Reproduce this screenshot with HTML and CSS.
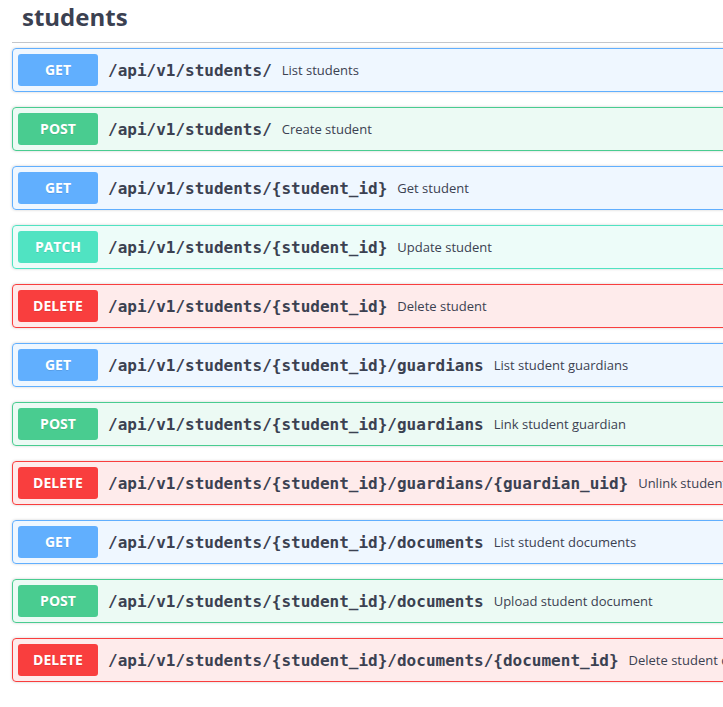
FILE: index.html
```html
<!DOCTYPE html>
<html lang="en">
<head>
    <meta charset="UTF-8">
    <title>students</title>
    <link rel="stylesheet" href="styles.css">
</head>
<body>
    <div class="opblock-tag-section">
        <h3 class="opblock-tag"><span>students</span></h3>
        <div class="operations">
            <div class="opblock opblock-get">
                <span class="opblock-method">GET</span>
                <span class="opblock-path">/api/v1/students/</span>
                <span class="opblock-desc">List students</span>
            </div>
            <div class="opblock opblock-post">
                <span class="opblock-method">POST</span>
                <span class="opblock-path">/api/v1/students/</span>
                <span class="opblock-desc">Create student</span>
            </div>
            <div class="opblock opblock-get">
                <span class="opblock-method">GET</span>
                <span class="opblock-path">/api/v1/students/{student_id}</span>
                <span class="opblock-desc">Get student</span>
            </div>
            <div class="opblock opblock-patch">
                <span class="opblock-method">PATCH</span>
                <span class="opblock-path">/api/v1/students/{student_id}</span>
                <span class="opblock-desc">Update student</span>
            </div>
            <div class="opblock opblock-delete">
                <span class="opblock-method">DELETE</span>
                <span class="opblock-path">/api/v1/students/{student_id}</span>
                <span class="opblock-desc">Delete student</span>
            </div>
            <div class="opblock opblock-get">
                <span class="opblock-method">GET</span>
                <span class="opblock-path">/api/v1/students/{student_id}/guardians</span>
                <span class="opblock-desc">List student guardians</span>
            </div>
            <div class="opblock opblock-post">
                <span class="opblock-method">POST</span>
                <span class="opblock-path">/api/v1/students/{student_id}/guardians</span>
                <span class="opblock-desc">Link student guardian</span>
            </div>
            <div class="opblock opblock-delete">
                <span class="opblock-method">DELETE</span>
                <span class="opblock-path">/api/v1/students/{student_id}/guardians/{guardian_uid}</span>
                <span class="opblock-desc">Unlink student guardian</span>
            </div>
            <div class="opblock opblock-get">
                <span class="opblock-method">GET</span>
                <span class="opblock-path">/api/v1/students/{student_id}/documents</span>
                <span class="opblock-desc">List student documents</span>
            </div>
            <div class="opblock opblock-post">
                <span class="opblock-method">POST</span>
                <span class="opblock-path">/api/v1/students/{student_id}/documents</span>
                <span class="opblock-desc">Upload student document</span>
            </div>
            <div class="opblock opblock-delete">
                <span class="opblock-method">DELETE</span>
                <span class="opblock-path">/api/v1/students/{student_id}/documents/{document_id}</span>
                <span class="opblock-desc">Delete student document</span>
            </div>
        </div>
    </div>
</body>
</html>
```

FILE: styles.css
```css
html, body {
    margin: 0;
    background: #fff;
    overflow: hidden;
}
body {
    font-family: "Open Sans", sans-serif;
    color: #3b4151;
}
.opblock-tag-section {
    width: 840px;
    margin-left: 12px;
}
.opblock-tag {
    margin: 0 0 5px;
    padding: 0 10px 8px;
    font-size: 24px;
    line-height: 34px;
    font-weight: 700;
    color: #3b4151;
    border-bottom: 1px solid rgba(59, 65, 81, 0.3);
}
.opblock {
    display: flex;
    align-items: center;
    padding: 5px;
    margin: 0 0 15px;
    border: 1px solid #000;
    border-radius: 4px;
    box-shadow: 0 0 3px rgba(0, 0, 0, 0.19);
    white-space: nowrap;
}
.opblock-method {
    min-width: 80px;
    padding: 6px 0;
    border-radius: 3px;
    font-size: 14px;
    line-height: 20px;
    font-weight: 700;
    text-align: center;
    color: #fff;
    text-shadow: 0 1px 0 rgba(0, 0, 0, 0.1);
}
.opblock-path {
    padding: 0 10px;
    font-family: "DejaVu Sans Mono", monospace;
    font-size: 16px;
    font-weight: 700;
    color: #3b4151;
}
.opblock-desc {
    font-size: 13px;
    color: #3b4151;
}
.opblock-get {
    background: rgba(97, 175, 254, 0.1);
    border-color: #61affe;
}
.opblock-get .opblock-method {
    background: #61affe;
}
.opblock-post {
    background: rgba(73, 204, 144, 0.1);
    border-color: #49cc90;
}
.opblock-post .opblock-method {
    background: #49cc90;
}
.opblock-patch {
    background: rgba(80, 227, 194, 0.1);
    border-color: #50e3c2;
}
.opblock-patch .opblock-method {
    background: #50e3c2;
}
.opblock-delete {
    background: rgba(249, 62, 62, 0.1);
    border-color: #f93e3e;
}
.opblock-delete .opblock-method {
    background: #f93e3e;
}
```
